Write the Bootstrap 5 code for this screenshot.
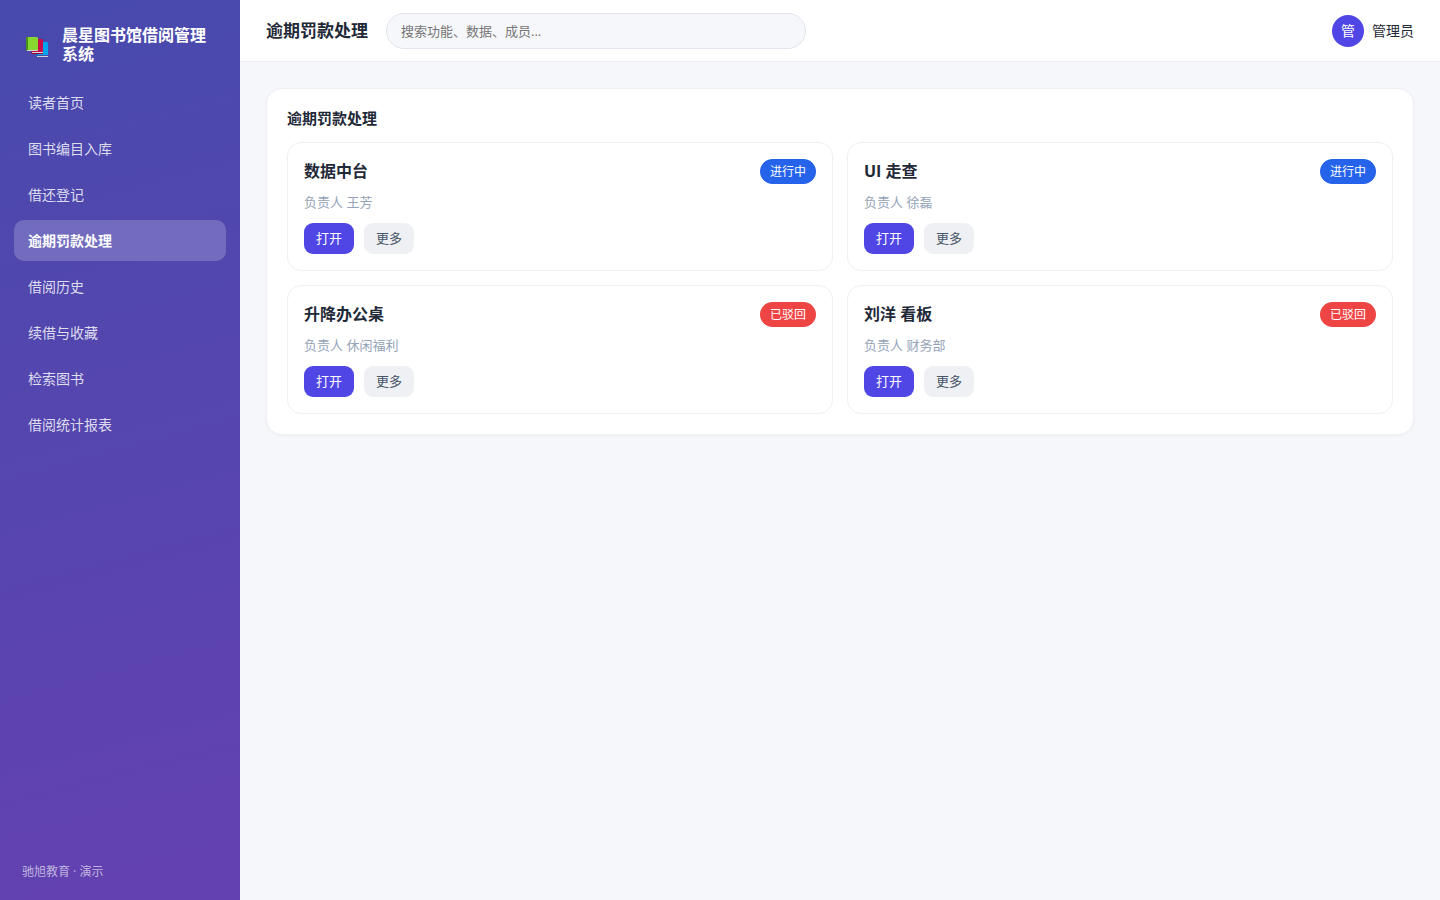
<!DOCTYPE html>
<html lang="zh-CN">
<head>
<meta charset="utf-8">
<meta name="viewport" content="width=device-width, initial-scale=1">
<title>逾期罚款处理</title>
<link href="https://cdn.jsdelivr.net/npm/bootstrap@5.3.0/dist/css/bootstrap.min.css" rel="stylesheet">
<style>
  body { font-family: "Open Sans", "Noto Sans CJK SC", sans-serif; font-size: 14px; line-height: 20px; color: #1f2937; background: #f5f7fb; }
  .sidebar { width: 240px; padding: 24px 14px 18px; background: linear-gradient(165deg, #484aad, #6441b0); }
  .brand { padding: 2px 8px; gap: 14px; margin-bottom: 16px; font-size: 16px; line-height: 19px; }
  .brand svg { margin: 3px 0 0 4px; }
  .side-nav { gap: 5px; }
  .side-nav .nav-link { padding: 10px 14px; line-height: 21px; border-radius: 10px; color: rgba(255,255,255,.82); }
  .side-nav .nav-link.active { background: rgba(255,255,255,.2); color: #fff; font-weight: 700; }
  .side-foot { padding: 0 8px; font-size: 12px; color: rgba(255,255,255,.6); }
  .topbar { height: 62px; padding: 0 26px; gap: 18px; border-bottom: 1px solid #eceef3; }
  .topbar h1 { font-size: 17px; line-height: 24px; }
  .search { max-width: 420px; height: 36px; padding: 0 14px; font-size: 13px; border-color: #e3e5ee; background: #f5f7fb; }
  .search::placeholder { color: #757575; }
  .avatar { width: 32px; height: 32px; background: #4f46e5; }
  .content { padding: 26px; }
  .panel { padding: 20px; border: 1px solid #eef0f4; border-radius: 16px; box-shadow: 0 1px 3px rgba(30,41,59,.04); }
  .panel h2 { font-size: 15px; line-height: 18px; margin-bottom: 15px; }
  .tiles { display: grid; grid-template-columns: repeat(2, 1fr); gap: 14px; }
  .tile { padding: 16px; border: 1px solid #eef0f3; border-radius: 14px; }
  .tile h3 { font-size: 16px; line-height: 25px; }
  .tile p { margin: 8px 0 11px; font-size: 13px; color: #94a3b8; }
  .status { padding: 0 10px; font-size: 12px; line-height: 25px; font-weight: 400; }
  .doing { background: #2563eb; }
  .rejected { background: #ef4444; }
  .actions { gap: 10px; }
  .tile .btn { padding: 0 12px; border: 0; border-radius: 9px; font-size: 13px; line-height: 31px; }
  .btn-open, .btn-open:hover { background: #4f46e5; color: #fff; }
  .btn-more, .btn-more:hover { background: #eef0f4; color: #475569; }
</style>
</head>
<body>
<div class="d-flex min-vh-100">
  <aside class="sidebar d-flex flex-column flex-shrink-0">
    <div class="brand d-flex align-items-center text-white fw-bold">
      <svg class="flex-shrink-0" width="22" height="20" viewBox="0 0 22 20" aria-hidden="true">
        <path fill="#00a6ed" d="M11 5h10l1 1v12H11z"/><path fill="#0074ba" d="M10 16h2v3h-2z"/><path fill="#d3d3d3" d="M11 19h11v1H11z"/>
        <path fill="#ca0b4a" d="M6 2h10l1 1v12H6z"/><path fill="#990838" d="M5 15h12v2H6l-1-1z"/><path fill="#d3d3d3" d="M6 15h11v1H6z"/>
        <path fill="#86d72f" d="M1 0h10l1 1v12H1z"/><path fill="#44911b" d="M0 0h2v13h10v1H1l-1-1z"/><path fill="#d3d3d3" d="M1 13h11v1H1z"/>
      </svg>
      <span>晨星图书馆借阅管理系统</span>
    </div>
    <nav class="side-nav nav flex-column">
      <a class="nav-link" href="#">读者首页</a>
      <a class="nav-link" href="#">图书编目入库</a>
      <a class="nav-link" href="#">借还登记</a>
      <a class="nav-link active" aria-current="page" href="#">逾期罚款处理</a>
      <a class="nav-link" href="#">借阅历史</a>
      <a class="nav-link" href="#">续借与收藏</a>
      <a class="nav-link" href="#">检索图书</a>
      <a class="nav-link" href="#">借阅统计报表</a>
    </nav>
    <div class="side-foot mt-auto">驰旭教育 · 演示</div>
  </aside>
  <div class="flex-grow-1">
    <header class="topbar d-flex align-items-center bg-white">
      <h1 class="m-0 fw-bold text-nowrap">逾期罚款处理</h1>
      <input class="search form-control rounded-pill" type="search" placeholder="搜索功能、数据、成员..." aria-label="搜索">
      <div class="d-flex align-items-center gap-2 ms-auto text-nowrap">
        <span class="avatar rounded-circle text-white d-flex align-items-center justify-content-center">管</span>
        <span>管理员</span>
      </div>
    </header>
    <main class="content">
      <section class="panel bg-white">
        <h2 class="fw-bold">逾期罚款处理</h2>
        <div class="tiles">
          <article class="tile">
            <div class="d-flex justify-content-between"><h3 class="m-0 fw-bold">数据中台</h3><span class="status doing badge rounded-pill">进行中</span></div>
            <p>负责人 王芳</p>
            <div class="actions d-flex"><button type="button" class="btn btn-open">打开</button><button type="button" class="btn btn-more">更多</button></div>
          </article>
          <article class="tile">
            <div class="d-flex justify-content-between"><h3 class="m-0 fw-bold">UI 走查</h3><span class="status doing badge rounded-pill">进行中</span></div>
            <p>负责人 徐磊</p>
            <div class="actions d-flex"><button type="button" class="btn btn-open">打开</button><button type="button" class="btn btn-more">更多</button></div>
          </article>
          <article class="tile">
            <div class="d-flex justify-content-between"><h3 class="m-0 fw-bold">升降办公桌</h3><span class="status rejected badge rounded-pill">已驳回</span></div>
            <p>负责人 休闲福利</p>
            <div class="actions d-flex"><button type="button" class="btn btn-open">打开</button><button type="button" class="btn btn-more">更多</button></div>
          </article>
          <article class="tile">
            <div class="d-flex justify-content-between"><h3 class="m-0 fw-bold">刘洋 看板</h3><span class="status rejected badge rounded-pill">已驳回</span></div>
            <p>负责人 财务部</p>
            <div class="actions d-flex"><button type="button" class="btn btn-open">打开</button><button type="button" class="btn btn-more">更多</button></div>
          </article>
        </div>
      </section>
    </main>
  </div>
</div>
<script src="https://cdn.jsdelivr.net/npm/bootstrap@5.3.0/dist/js/bootstrap.bundle.min.js"></script>
</body>
</html>
